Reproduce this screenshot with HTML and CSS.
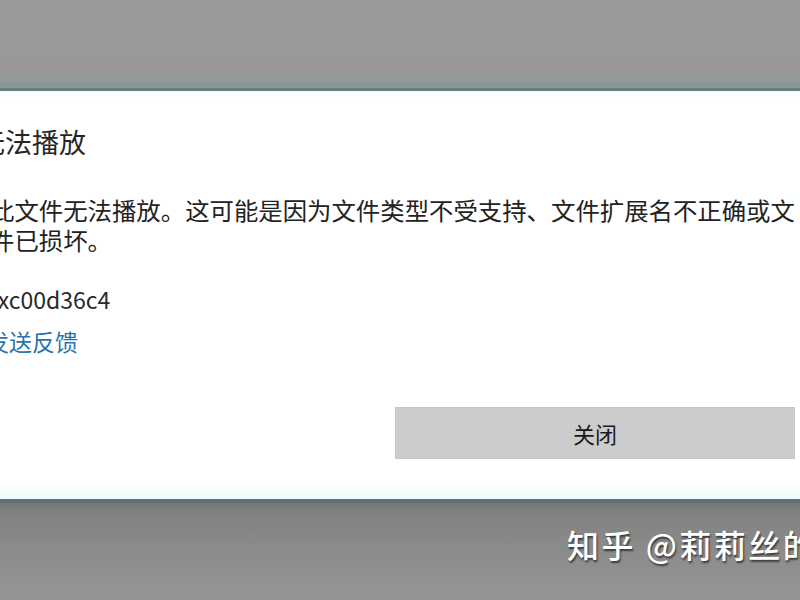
FILE: index.html
```html
<!DOCTYPE html>
<html lang="zh-CN">
<head>
<meta charset="utf-8">
<link rel="stylesheet" href="styles.css">
</head>
<body>
<div class="page">
  <div class="top-band"></div>
  <div class="dialog">
    <div class="content">
      <h1 class="title">无法播放</h1>
      <p class="message">此文件无法播放。这可能是因为文件类型不受支持、文件扩展名不正确或文件已损坏。</p>
      <p class="code">0xc00d36c4</p>
      <a class="link">发送反馈</a>
    </div>
    <div class="actions">
      <button class="btn">关闭</button>
    </div>
  </div>
  <div class="bottom-band">
    <span class="watermark">知乎 @莉莉丝的猫</span>
  </div>
</div>
</body>
</html>
```
FILE: styles.css
```css
html, body {
  margin: 0;
  padding: 0;
  width: 800px;
  height: 600px;
  overflow: hidden;
  background: #999999;
  font-family: "Noto Sans CJK SC", "Microsoft YaHei", sans-serif;
}
.page {
  width: 800px;
  height: 600px;
  display: flex;
  flex-direction: column;
  overflow: hidden;
}
.top-band {
  height: 82px;
  background: linear-gradient(#9a9a9a 0px, #999999 58px, #9a9794 64px, #9a989a 72px, #929a98 82px);
  border-bottom: 6px solid #8a9698;
  flex: none;
}
.dialog {
  flex: none;
  height: 408px;
  background: linear-gradient(#f6fefe 0px, #ffffff 10px, #ffffff 392px, #eefafb 408px);
  border-top: 3px solid #6c7b7e;
  border-bottom: 4px solid #607075;
  display: flex;
  flex-direction: column;
}
.content {
  margin-left: -14px;
  padding-top: 33px;
  display: flex;
  flex-direction: column;
  align-items: flex-start;
  width: 830px;
}
.title {
  margin: 0 0 0 -8px;
  font-size: 27px;
  font-weight: 400;
  line-height: 36px;
  color: #262626;
}
.message {
  margin: 35px 0 0 4px;
  font-size: 24.4px;
  line-height: 30px;
  color: #222222;
  width: 812px;
}
.code {
  margin: 29px 0 0 -1px;
  font-size: 23px;
  line-height: 30px;
  color: #2a2a2a;
}
.link {
  margin-top: 11px;
  font-size: 23px;
  line-height: 32px;
  color: #2b74ab;
}
.actions {
  margin-top: auto;
  margin-bottom: 40px;
  display: flex;
  justify-content: flex-end;
  padding-right: 5px;
}
.btn {
  width: 400px;
  height: 52px;
  background: #cccccc;
  border: 1px solid #c6c6c6;
  font-family: "Noto Sans CJK SC", sans-serif;
  font-size: 22px;
  color: #1a1a1a;
  padding: 0;
}
.bottom-band {
  flex: 1;
  background: linear-gradient(#6f7778 0px, #7f7f7f 6px, #8a8a8a 40px, #969696 100px);
  display: flex;
  justify-content: flex-start;
  padding-left: 567px;
  padding-top: 21px;
  white-space: nowrap;
}
.watermark {
  font-size: 32px;
  font-weight: 500;
  line-height: 40px;
  color: #ffffff;
  text-shadow: 1px 2px 2px rgba(0,0,0,0.6);
  letter-spacing: 2.5px;
}
```
